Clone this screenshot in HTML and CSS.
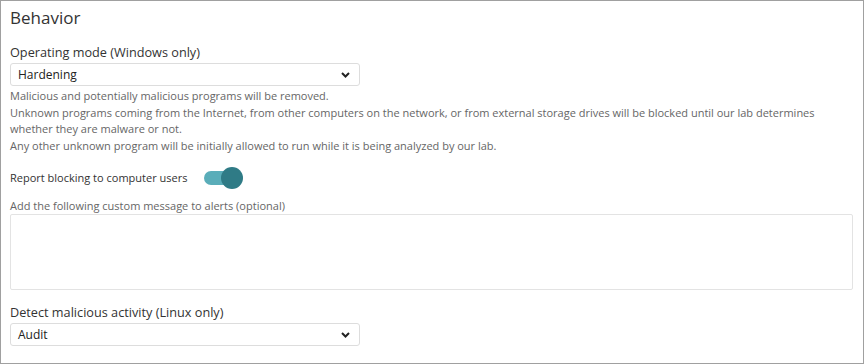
FILE: index.html
```html
<!DOCTYPE html>
<html lang="en">

<head>
    <meta charset="utf-8">
    <title>Behavior</title>
    <link rel="stylesheet" href="styles.css">
</head>

<body>
    <section class="panel">
        <h2 class="panel-title">Behavior</h2>

        <div class="field">
            <label class="field-label" for="mode">Operating mode (Windows only)</label>
            <div class="select">
                <span id="mode">Hardening</span>
                <svg class="chevron" width="9" height="6" viewBox="0 0 9 6"><path d="M1 1 L4.5 4.5 L8 1" fill="none" stroke="#222" stroke-width="2"/></svg>
            </div>
            <p class="help">
                Malicious and potentially malicious programs will be removed.<br>
                Unknown programs coming from the Internet, from other computers on the network, or from external storage drives will be blocked until our lab determines whether they are malware or not.<br>
                Any other unknown program will be initially allowed to run while it is being analyzed by our lab.
            </p>
        </div>

        <div class="toggle-row">
            <span class="toggle-label">Report blocking to computer users</span>
            <span class="toggle"><span class="knob"></span></span>
        </div>

        <div class="field">
            <label class="small-label" for="msg">Add the following custom message to alerts (optional)</label>
            <div class="textarea" id="msg"></div>
        </div>

        <div class="field">
            <label class="field-label" for="linux">Detect malicious activity (Linux only)</label>
            <div class="select">
                <span id="linux">Audit</span>
                <svg class="chevron" width="9" height="6" viewBox="0 0 9 6"><path d="M1 1 L4.5 4.5 L8 1" fill="none" stroke="#222" stroke-width="2"/></svg>
            </div>
        </div>
    </section>
</body>

</html>
```

FILE: styles.css
```css
body {
    margin: 0;
    font-family: 'Open Sans', sans-serif;
    color: #333;
    background-color: white;
}

.panel {
    box-sizing: border-box;
    width: 864px;
    height: 364px;
    border: 1px solid #a0a0a0;
    padding: 5px 10px 0 9px;
}

.panel-title {
    margin: 0;
    font-size: 17px;
    font-weight: 400;
    line-height: 24px;
    color: #333;
}

.field {
    margin-top: 13px;
}

.field-label {
    display: block;
    font-size: 12.7px;
    line-height: 18px;
    color: #333;
}

.select {
    box-sizing: border-box;
    width: 350px;
    height: 23px;
    margin-top: 2px;
    border: 1px solid #ddd;
    border-radius: 3px;
    padding: 0 9px 0 7px;
    display: flex;
    align-items: center;
    justify-content: space-between;
    font-size: 12px;
    color: #222;
}

.help {
    margin: 2px 0 0;
    font-size: 11px;
    line-height: 16.5px;
    color: #666;
}

.toggle-row {
    display: flex;
    align-items: center;
    gap: 17px;
    height: 15px;
    margin-top: 16px;
}

.toggle-label {
    font-size: 11px;
    color: #333;
}

.toggle {
    position: relative;
    width: 36px;
    height: 14px;
    border-radius: 7px;
    background-color: #5aadb9;
}

.knob {
    position: absolute;
    right: -3px;
    top: -4px;
    width: 22px;
    height: 22px;
    border-radius: 50%;
    background-color: #2f7b86;
}

.small-label {
    display: block;
    font-size: 11px;
    line-height: 16px;
    color: #666;
}

.textarea {
    box-sizing: border-box;
    width: 843px;
    height: 76px;
    border: 1px solid #e3e3e3;
    border-radius: 2px;
}
```
